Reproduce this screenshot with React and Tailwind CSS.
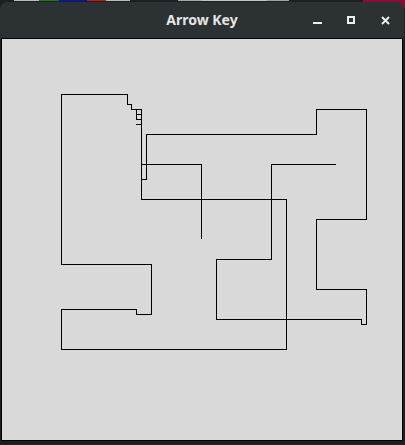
import React from 'react';

// Desktop strip peeking out above the window
const strip = [
    { w: 'w-[14px]', c: 'bg-transparent' },
    { w: 'w-[25px]', c: 'bg-[#bcbcbc]' },
    { w: 'w-[20px]', c: 'bg-[#177a17]' },
    { w: 'w-[28px]', c: 'bg-[#0a0ad0]' },
    { w: 'w-[19px]', c: 'bg-[#d21414]' },
    { w: 'w-[24px]', c: 'bg-[#bdbdbd]' },
    { w: 'w-[48px]', c: 'bg-transparent' },
    { w: 'w-[24px]', c: 'bg-[#a8a8a8]' },
    { w: 'w-[65px]', c: 'bg-[#c4c4c4]' },
    { w: 'w-[22px]', c: 'bg-[#a3a3a3]' },
    { w: 'w-[74px]', c: 'bg-transparent' },
];

const App = () => {
    return (
        <div className="w-[405px] h-[445px] bg-[#1d2021] overflow-hidden" style={{ fontFamily: '"Noto Sans", "Open Sans", sans-serif' }}>
            <div className="flex items-start h-[8px]">
                {strip.map((s, i) => (
                    <div key={i} className={`${s.w} h-px ${s.c}`} />
                ))}
                <div className="flex-1 h-full bg-[#8a0b37]" />
            </div>

            {/* Window */}
            <div className="relative -mt-[6px] w-[404px]">
                {/* Title bar */}
                <div className="grid grid-cols-[1fr_auto_1fr] items-center h-[36px] bg-[#2c3134] rounded-t-[7px]">
                    <div />
                    <span className="text-[14px] font-bold text-[#e6e6e4] leading-none pb-[1px]">Arrow Key</span>
                    <div className="flex items-center justify-end pr-[14px]">
                        <svg width="9" height="9" viewBox="0 0 9 9" className="mt-[1px]">
                            <rect x="0" y="6" width="9" height="2" fill="#eeeeec" />
                        </svg>
                        <svg width="8" height="8" viewBox="0 0 8 8" className="ml-[25px]">
                            <rect x="1" y="1" width="6" height="6" fill="none" stroke="#eeeeec" strokeWidth="2" />
                        </svg>
                        <svg width="9" height="9" viewBox="0 0 9 9" className="ml-[26px]">
                            <path d="M1 1L8 8M8 1L1 8" stroke="#eeeeec" strokeWidth="2" />
                        </svg>
                    </div>
                </div>

                {/* Canvas */}
                <div className="px-px bg-[#1d2021]">
                    <div className="border border-black bg-[#d9d9d9]">
                        <svg width="400" height="401" viewBox="2 39 400 401" className="block" shapeRendering="crispEdges">
                            <g fill="none" stroke="#000" strokeWidth="1" strokeLinecap="square">
                                <path d="M61.5 94.5H127.5V104.5H131.5V109.5H141.5V199.5H286.5V349.5H61.5V309.5H136.5V314.5H151.5V264.5H61.5Z" />
                                <path d="M136.5 109.5V119.5M136.5 114.5H141.5M136.5 119.5H141.5M136.5 124.5H141.5" />
                                <path d="M141.5 179.5H146.5V134.5H316.5V109.5H366.5V219.5H316.5V289.5H366.5V324.5H361.5V319.5H216.5V259.5H271.5V164.5H335.5" />
                                <path d="M141.5 164.5H201.5V238.5" />
                            </g>
                        </svg>
                    </div>
                </div>
            </div>
        </div>
    );
};

export default App;
